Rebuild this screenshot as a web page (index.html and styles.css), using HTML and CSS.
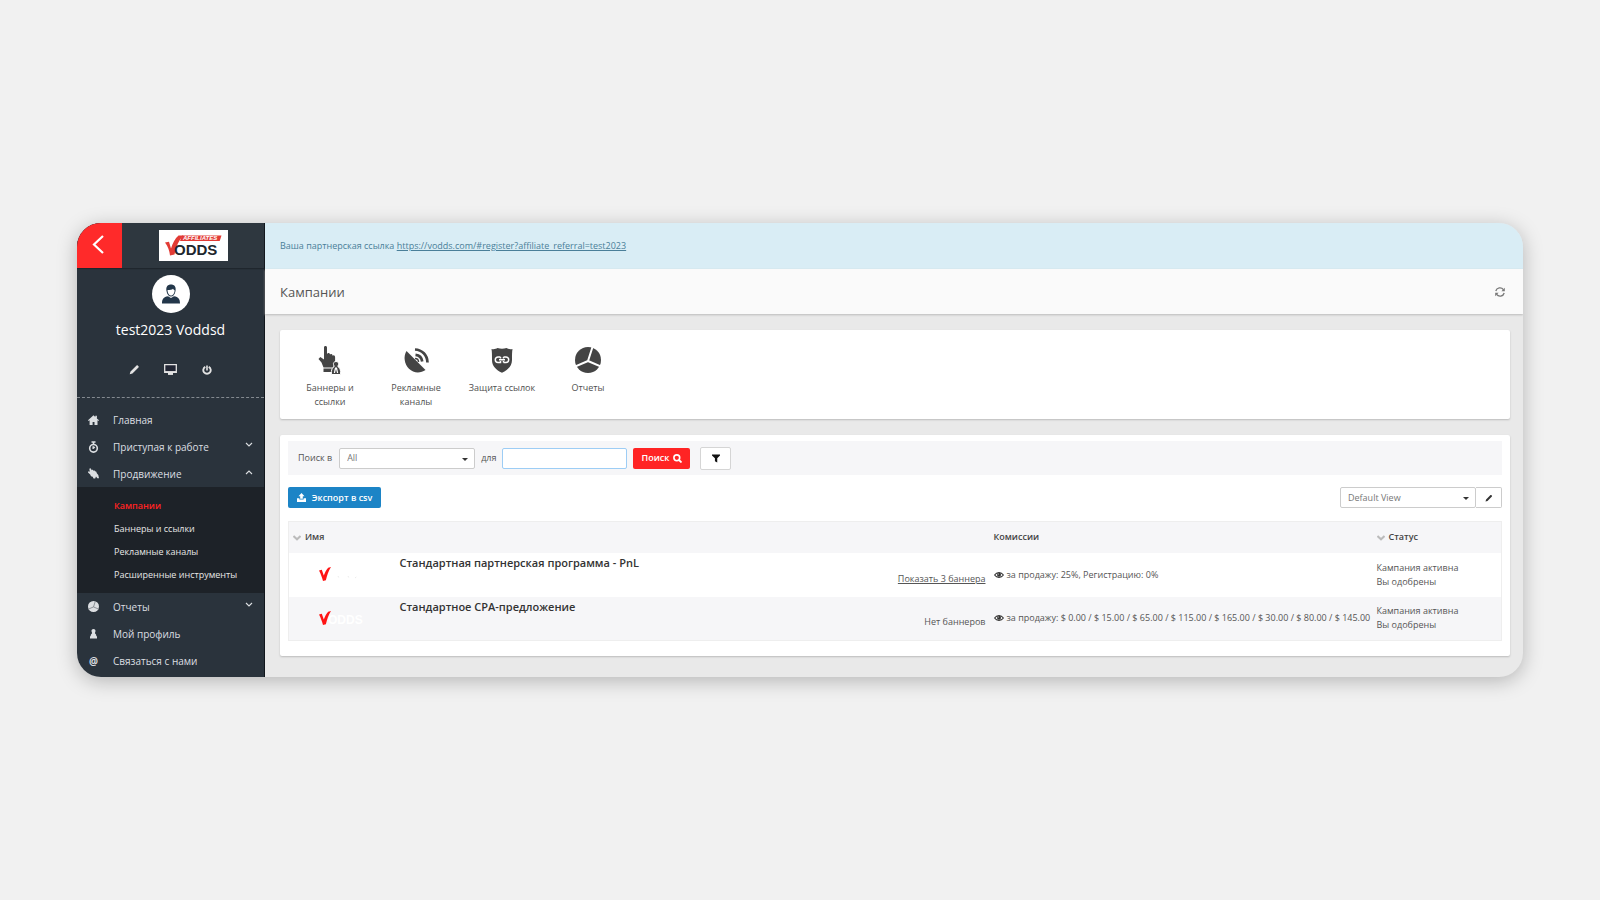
FILE: index.html
```html
<!DOCTYPE html>
<html lang="ru">
<head>
<meta charset="utf-8">
<title>Кампании</title>
<link rel="stylesheet" href="styles.css">
</head>
<body>
<svg class="defs" aria-hidden="true">
  <symbol id="pencil" viewBox="0 0 16 16"><path d="M1 15l1.200-4L11 2.200c.5-.5 1.200-.5 1.700 0l1.100 1.100c.5.5.5 1.200 0 1.700L5 13.800z" fill="currentColor"/></symbol>
  <symbol id="pie" viewBox="0 0 26 26"><circle cx="13" cy="13" r="13" fill="currentColor"/><path class="pie-cut" d="M13 14L17.500 0M13 14L0 19.500M13 14L26 19.500"/></symbol>
  <symbol id="down" viewBox="0 0 8 6"><path d="M1 1l3 3 3-3" fill="none" stroke="currentColor" stroke-width="1.100"/></symbol>
  <symbol id="sort" viewBox="0 0 8 6"><path d="M.5 1L4 4.300 7.500 1" fill="none" stroke="currentColor" stroke-width="2"/></symbol>
  <symbol id="eye" viewBox="0 0 10 8"><path d="M.6 4C2.800.8 7.200.8 9.400 4 7.200 7.200 2.800 7.200.6 4z" fill="#fff" stroke="currentColor" stroke-width="1.100"/><circle cx="5" cy="3.700" r="2" fill="currentColor"/><path d="M4.100 3.600c0-.6.4-.9.9-.9" fill="none" stroke="#fff" stroke-width=".6"/></symbol>
  <symbol id="check" viewBox="0 0 12 14"><path d="M0 3.500l2.800-.7 2 5.700C6 5.300 7.500 2.300 9.200.7L12 0C9.500 4 8 8.500 6.900 13.200L4 14C3 10.300 1.800 6.900 0 3.500z" fill="#ff1414"/></symbol>
</svg>
<main class="app">
  <aside class="sidebar">
    <header class="brand">
      <button class="back" type="button" aria-label="Назад"><svg width="12" height="20" viewBox="0 0 12 20"><path d="M11 2L2 10.500l9 8.500" fill="none" stroke="#fff" stroke-width="2.200"/></svg></button>
      <a class="logo" href="#" aria-label="Vodds Affiliates">
        <svg width="69" height="31" viewBox="0 0 69 31">
          <path d="M23 5.500h39.500l-1.800 5.500H21z" fill="#e23b35"/>
          <path d="M6 12.500l4-.7 2 6.700C13.500 13.500 16 8.500 19.500 5.500h5C19.500 10.500 17 17 15.500 24.500L11 25.500C10.500 20.500 9 16.500 6 12.500z" fill="#e23b35"/>
          <text class="logo-small" x="24" y="10">AFFILIATES</text>
          <text class="logo-big" x="15" y="25">ODDS</text>
        </svg>
      </a>
    </header>
    <section class="profile">
      <div class="avatar"><svg width="20" height="20" viewBox="0 0 20 20"><path d="M1 19.500c0-4.500 1.500-6.500 6-7.300l3 1.800 3-1.800c4.500.8 6 2.800 6 7.300z" fill="#23374a"/><path d="M5.500 7C4.600 2.500 7 .5 10 .5s5.400 2 4.500 6.500c-.4 3.500-2.300 5.500-4.500 5.500S5.900 10.500 5.500 7z" fill="#23374a"/><path d="M6.500 6c2.500 0 4.500-.3 5.500-1.300.5.800 1 1.200 1.600 1.500 0 3.200-1.800 5.400-3.600 5.400S6.500 9.500 6.500 6z" fill="#fff"/></svg></div>
      <h2 class="username">test2023 Voddsd</h2>
      <nav class="profile-actions">
        <button type="button" aria-label="Редактировать"><svg width="11" height="11"><use href="#pencil"/></svg></button>
        <button type="button" aria-label="Экран"><svg width="13" height="11" viewBox="0 0 13 11"><path d="M.7.700h11.600v7.600H.7z" fill="#222634" stroke="currentColor" stroke-width="1.300"/><path d="M1 7.600h11M4.500 9h4v1.800h-4z" fill="currentColor" stroke="currentColor"/></svg></button>
        <button type="button" aria-label="Выход"><svg width="10" height="10" viewBox="0 0 10 10"><path d="M3.300 1.800a3.700 3.700 0 1 0 3.400 0" fill="none" stroke="currentColor" stroke-width="1.900"/><path d="M5 .5v5" stroke="currentColor" stroke-width="1.600"/></svg></button>
      </nav>
    </section>
    <nav class="menu">
      <a href="#"><svg width="11" height="10" viewBox="0 0 11 10"><path d="M0 5.300L5.500.3 7.300 2V.7h1.600v2.700L11 5.300l-.6.700-.9-.7V10H6.500V7H4.600v3H1.600V5.300L.6 6z" fill="currentColor"/></svg><span>Главная</span></a>
      <a href="#"><svg width="11" height="12" viewBox="0 0 11 12"><circle cx="5.500" cy="7.300" r="3.800" fill="none" stroke="currentColor" stroke-width="1.600"/><path d="M3.500 1h4M5.500.5v3M5.200 8V5.200M5 7.500l1.800-1.500" fill="none" stroke="currentColor" stroke-width="1.500"/></svg><span>Приступая к работе</span><svg class="arrow" width="8" height="6"><use href="#down"/></svg></a>
      <a href="#"><svg width="11" height="11" viewBox="0 0 11 11"><path d="M1.300.8L2.600.2l1.200 2 .8-.6.9 1.200.8-.5.9 1.300.8-.3 1 2.300 1.300 1.400.7 3.200H9.300L8 8.500l-.8 2H5.500l-.8-1.700L3 8.300 2.200 6.500 0 4.500l.3-1.300 1.500.5z" fill="currentColor"/></svg><span>Продвижение</span><svg class="arrow flip" width="8" height="6"><use href="#down"/></svg></a>
      <div class="submenu">
        <a class="active" href="#">Кампании</a>
        <a href="#">Баннеры и ссылки</a>
        <a href="#">Рекламные каналы</a>
        <a href="#">Расширенные инструменты</a>
      </div>
      <a href="#"><svg class="dark-cut" width="11" height="11"><use href="#pie"/></svg><span>Отчеты</span><svg class="arrow" width="8" height="6"><use href="#down"/></svg></a>
      <a href="#"><svg width="11" height="10" viewBox="0 0 11 10"><path d="M5.500 0C7 0 7.700 1 7.500 2.300L6.900 4.200C8 5 8.300 6 8.400 7.300h.6V9.500H2V7.300h.6C2.700 6 3 5 4.100 4.200L3.500 2.300C3.300 1 4 0 5.500 0z" fill="currentColor"/></svg><span>Мой профиль</span></a>
      <a href="#"><b class="at" aria-hidden="true">@</b><span>Связаться с нами</span></a>
    </nav>
  </aside>
  <section class="content">
    <p class="notice">Ваша партнерская ссылка <a href="#">https://vodds.com/#register?affiliate_referral=test2023</a></p>
    <header class="titlebar">
      <h1>Кампании</h1>
      <button type="button" aria-label="Обновить"><svg width="10" height="10" viewBox="0 0 10 10"><path d="M.8 4A4.300 4.300 0 0 1 8.400 2.600M9.200 6A4.300 4.300 0 0 1 1.600 7.400" fill="none" stroke="currentColor" stroke-width="1.300"/><path d="M9.800.8v3.400H6.400zM.2 9.200V5.800h3.400z" fill="currentColor"/></svg></button>
    </header>
    <nav class="card shortcuts">
      <a href="#"><svg width="26" height="30" viewBox="0 0 26 30"><path d="M7 2.500C7 1.500 7.600 1 8.500 1s1.500.6 1.500 1.500V9l1-1c1.200-.2 2 .5 2 1.500l.8-.5c1.200 0 1.800.7 1.800 1.700l.8-.4c1.200 0 1.700.9 1.700 2V18l-2 4.500H6.500L4.500 17.500 1.500 14l1.800-2L7 14.500zM6.500 23.500h9V27h-9z" fill="currentColor"/><path class="figure" d="M19 16.500c2 0 2.900 1.500 2.500 3l-.7 2c2 1 2.500 3 2.800 5V29.500h-9.200V26.500c.3-2 .8-4 2.800-5l-.7-2c-.4-1.500.5-3 2.500-3z"/><path d="M18 22.500h2l1.200 5.500h-1.200L19 24l-1 4h-1.200z" fill="#fff"/></svg><span>Баннеры и ссылки</span></a>
      <a href="#"><svg width="26" height="30" viewBox="0 0 26 30"><path d="M3.500 6L22.500 25c-5 3.500-12 3.300-16.500-1.200S0 11.500 3.500 6z" fill="currentColor"/><path d="M12 4.500C19 4.800 24.300 10 24.500 17.500M12.500 9.800c3.800.4 6.300 3 6.700 6.700" fill="none" stroke="currentColor" stroke-width="2.700"/><path d="M12 13.500c2 0 3.500 1.500 3.500 3.500" fill="none" stroke="currentColor" stroke-width="1.500"/></svg><span>Рекламные каналы</span></a>
      <a href="#"><svg width="26" height="30" viewBox="0 0 26 30"><path d="M2.500 4C5 4.500 7 4 8.500 3c3 1 6 1 9 0C19 4 21 4.500 23.500 4c-.5 3-.5 6-.5 11 0 6-4 10-10 12.800C7 25 3 21 3 15 3 10 3 7 2.500 4z" fill="currentColor"/><path d="M11.500 12H9a2.700 2.700 0 0 0 0 5.400h2.500V16M14.500 12H17a2.700 2.700 0 0 1 0 5.400h-2.500M11.500 12v1.400M14.500 12v1.400M14.500 17.400V16M10 14.700h6" fill="none" stroke="#fff" stroke-width="1.500"/></svg><span>Защита ссылок</span></a>
      <a href="#"><svg width="26" height="30" viewBox="0 -2 26 30"><use href="#pie" width="26" height="26"/></svg><span>Отчеты</span></a>
    </nav>
    <section class="card">
      <form class="search" onsubmit="return false">
        <label for="field">Поиск в</label>
        <span class="select"><select id="field"><option>All</option></select></span>
        <label for="query">для</label>
        <input id="query" type="text">
        <button class="primary" type="submit">Поиск <svg width="9" height="9" viewBox="0 0 9 9"><circle cx="3.800" cy="3.800" r="2.900" fill="none" stroke="#fff" stroke-width="1.600"/><path d="M6 6l2.500 2.500" stroke="#fff" stroke-width="1.800"/></svg></button>
        <button class="filter" type="button" aria-label="Фильтр"><svg width="8" height="9" viewBox="0 0 9 9"><path d="M0 0h9v1L5.900 4.300V9L3.300 7.500V4.300L0 1z" fill="#111"/></svg></button>
      </form>
      <div class="toolbar">
        <button class="export" type="button"><svg width="9" height="9" viewBox="0 0 9 9"><path d="M4.500 0L7.500 3.200H5.800v2.500H3.200V3.200H1.500zM0 5.300h2.400v1.200h4.200V5.300H9V9H0z" fill="#fff"/></svg>Экспорт в csv</button>
        <div class="view">
          <span class="select"><select aria-label="Вид"><option>Default View</option></select></span>
          <button type="button" aria-label="Изменить вид"><svg width="8" height="8"><use href="#pencil"/></svg></button>
        </div>
      </div>
      <table class="campaigns">
        <thead><tr>
          <th colspan="3"><svg width="8" height="6"><use href="#sort"/></svg>Имя</th>
          <th class="c-fee">Комиссии</th>
          <th class="c-status"><svg width="8" height="6"><use href="#sort"/></svg>Статус</th>
        </tr></thead>
        <tbody>
          <tr>
            <td class="c-mark"><svg width="52" height="14" viewBox="0 0 52 14"><use href="#check" width="12" height="14"/><path d="M19 9l.7 1.500M29 9l.7 1.500M36 11l1.300-1" stroke="#ddd" stroke-width=".6"/></svg></td>
            <td class="c-name">Стандартная партнерская программа - PnL</td>
            <td class="c-banners"><a href="#">Показать 3 баннера</a></td>
            <td class="c-rate"><svg width="10" height="8"><use href="#eye"/></svg>за продажу: 25%, Регистрацию: 0%</td>
            <td>Кампания активна<br>Вы одобрены</td>
          </tr>
          <tr>
            <td class="c-mark"><svg width="52" height="14" viewBox="0 0 52 14"><text class="mark-text" x="9" y="13">ODDS</text><use href="#check" width="12" height="14"/></svg></td>
            <td class="c-name">Стандартное CPA-предложение</td>
            <td class="c-banners">Нет баннеров</td>
            <td class="c-rate"><svg width="10" height="8"><use href="#eye"/></svg>за продажу: $ 0.00 / $ 15.00 / $ 65.00 / $ 115.00 / $ 165.00 / $ 30.00 / $ 80.00 / $ 145.00</td>
            <td>Кампания активна<br>Вы одобрены</td>
          </tr>
        </tbody>
      </table>
    </section>
  </section>
</main>
</body>
</html>
```
FILE: styles.css
```css
* { box-sizing: border-box; }
body {
  margin: 0;
  min-height: 100vh;
  padding: 24px 77px;
  display: flex;
  align-items: center;
  background: #f1f1f1;
  color: #555;
  font: 9px/14px "Open Sans", "Noto Sans", sans-serif;
}
button, input, select { font: inherit; color: inherit; margin: 0; padding: 0; }
button { display: inline-flex; align-items: center; justify-content: center; border: 0; background: none; cursor: pointer; }
a { color: inherit; text-decoration: none; }
h1, h2, p { margin: 0; font-weight: 400; }
svg { flex: none; }
.defs { position: absolute; width: 0; height: 0; }
.pie-cut { fill: none; stroke: var(--cut, #fff); stroke-width: var(--cut-width, 1px); }
.shortcuts { --cut-width: 2px; }
.dark-cut { --cut: #7b8187; --cut-width: 2px; }

.app {
  flex: 1;
  min-width: 0;
  display: flex;
  border-radius: 24px;
  overflow: hidden;
  background: #e9e9e9;
  box-shadow: 0 4px 20px rgba(0, 0, 0, .25);
}

.sidebar { flex: none; width: 188px; background: #2a333c; color: #dcdfe2; border-right: 1px solid #11161c; }
.brand { display: flex; height: 45px; background: #2e373f; box-shadow: 0 1px 1px #1f262d; }
.back { width: 45px; background: #ff2a2a; }
.back svg { margin-right: 4px; margin-bottom: 4px; }
.logo { flex: 1; display: flex; align-items: center; justify-content: center; }
.logo svg { background: #fff; }
.logo-small { font: italic bold 6px "Liberation Sans", sans-serif; fill: #fff; }
.logo-big { font: bold 15px "Liberation Sans", sans-serif; fill: #20262c; }

.profile { display: flex; flex-direction: column; align-items: center; padding-top: 7px; border-bottom: 1px dashed #848a90; }
.avatar { display: flex; align-items: center; justify-content: center; width: 38px; height: 38px; border-radius: 50%; background: #fff; }
.username { margin-top: 7px; font-size: 14px; line-height: 20px; color: #fff; }
.profile-actions { display: flex; gap: 12px; padding: 21px 0 19px; }
.profile-actions button { width: 24px; height: 17px; color: #e3e3e3; }

.menu { padding: 8px 0 2px; font-size: 10px; }
.menu > a { display: flex; align-items: center; height: 27px; padding: 0 11px 0 11px; gap: 14px; }
.menu > a > span { flex: 1; }
.at { width: 11px; text-align: center; }
.arrow { margin-bottom: 4px; }
.arrow.flip { transform: rotate(180deg); }
.submenu { display: flex; flex-direction: column; padding: 7px 0 7px 37px; background: #1d2228; font-size: 9px; color: #e6e6e6; }
.submenu a { line-height: 23px; }
.submenu .active { color: #f22; font-weight: 600; }

.content { flex: 1; min-width: 0; padding-bottom: 21px; }
.notice { padding: 16px 15px; background: #d9edf5; color: #4a7f99; }
.notice a { text-decoration: underline; }
.titlebar { display: flex; align-items: center; justify-content: space-between; height: 45px; padding: 0 18px 0 15px; background: #fafafa; box-shadow: 0 1px 2px #bbb; }
.titlebar button { color: #777; }
.titlebar h1 { font-size: 13px; line-height: 20px; }
.card { margin: 16px 13px 0 15px; padding: 6px 8px 15px; background: #fff; border-radius: 2px; box-shadow: 0 1px 2px #bbb; }
.shortcuts { display: flex; padding: 15px 7px 10px; }
.shortcuts a { display: flex; flex-direction: column; align-items: center; width: 86px; padding: 0 12px; text-align: center; color: #505050; }
.shortcuts a:nth-child(3) { padding: 0; }
.shortcuts svg { color: #444; margin-bottom: 6px; }
.figure { fill: #444; stroke: #fff; stroke-width: 1px; }

.search { display: flex; align-items: center; height: 34px; padding: 0 10px; background: #f6f6f8; }
.select { position: relative; display: block; }
.select::after { content: ""; position: absolute; right: 7px; top: 10px; border: 3px solid transparent; border-top-color: #333; pointer-events: none; }
.select select { display: block; width: 136px; height: 21px; padding: 0 7px; appearance: none; background: #fff; border: 1px solid #ccc; border-radius: 2px; color: #777; }
.search .select { margin: 0 6px 0 7px; }
.search input { width: 125px; height: 21px; margin: 0 6px; padding: 0 6px; border: 1px solid #9dcdf5; border-radius: 2px; background: #fff; }
.primary { gap: 4px; width: 57px; height: 21px; border-radius: 2px; background: #ff2424; color: #fff; font-weight: 600; }
.filter { width: 31px; height: 23px; margin-left: 10px; background: #fff; border: 1px solid #d5d5d5; border-radius: 2px; }
.toolbar { display: flex; justify-content: space-between; padding: 12px 0 13px; }
.export { gap: 6px; width: 93px; height: 21px; background: #1c84c6; border-radius: 2px; color: #fff; font-weight: 600; }
.view { display: flex; }
.view button { width: 26px; height: 21px; border: 1px solid #ccc; border-left: 0; border-radius: 0 2px 2px 0; color: #333; }

.campaigns { width: 100%; border-collapse: collapse; border: 1px solid #eee; }
.campaigns th { height: 31px; padding: 0 4px; text-align: left; font-weight: 600; color: #444; background: #f6f6f8; }
.campaigns th svg { margin-right: 4px; color: #bbb; vertical-align: -1px; }
.campaigns td { height: 44px; padding: 0 4px; }
.campaigns td svg { color: #333; margin-right: 3px; vertical-align: -1px; }
.campaigns tbody tr:nth-child(2) { background: #f6f6f8; }
.campaigns .c-mark { width: 107px; padding: 2px 0 0 30px; }
.campaigns .c-name { vertical-align: top; padding-top: 3px; font-size: 11px; font-weight: 600; color: #333; }
.campaigns .c-banners { width: 110px; padding-top: 8px; text-align: right; white-space: nowrap; }
.c-banners a { text-decoration: underline; }
.campaigns .c-fee { width: 383px; }
.campaigns .c-rate { padding-right: 0; white-space: nowrap; }
.campaigns .c-status { width: 129px; }
.mark-text { font: bold 12px "Liberation Sans", sans-serif; fill: #fff; }
```
